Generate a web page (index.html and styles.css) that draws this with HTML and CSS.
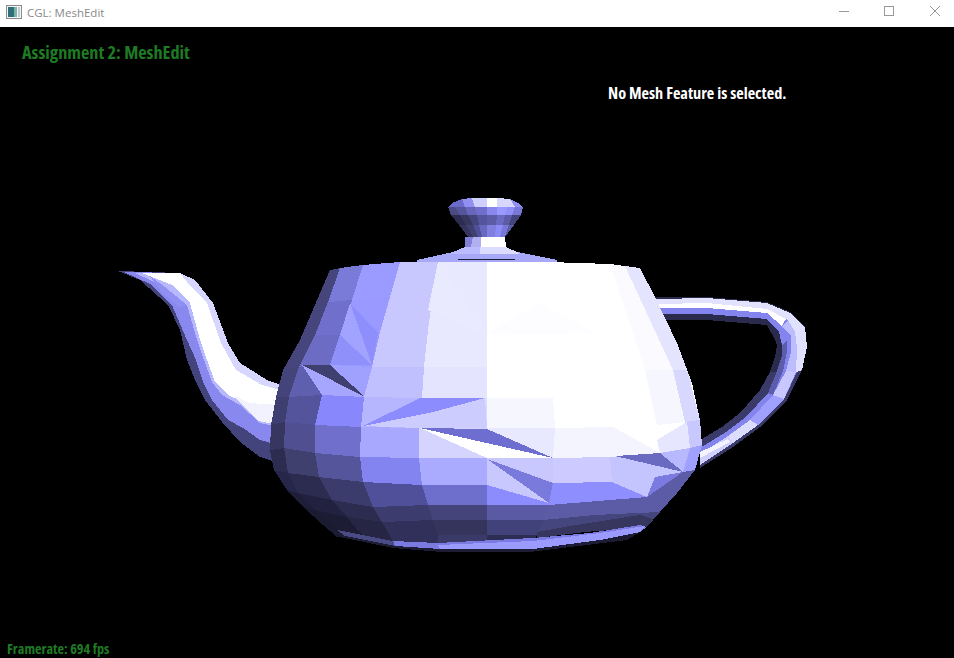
FILE: index.html
```html
<!DOCTYPE html>
<html lang="en">
<head>
<meta charset="utf-8">
<title>CGL: MeshEdit</title>
<link rel="stylesheet" href="styles.css">
</head>
<body>
<div class="window">
  <header class="titlebar">
    <svg class="app-icon" width="16" height="16" viewBox="0 0 16 16">
      <rect x="0.5" y="1.5" width="15" height="13" fill="#f4f4f4" stroke="#8c8c8c"/>
      <rect x="2" y="3" width="6" height="10" fill="#2f6f7a"/>
      <rect x="8" y="3" width="3" height="10" fill="#7fb3a8"/>
      <rect x="12" y="3" width="2" height="10" fill="#c4c9d4"/>
    </svg>
    <span class="title">CGL: MeshEdit</span>
    <div class="controls">
      <svg class="control" width="46" height="27" viewBox="0 0 46 27"><path d="M23 11.5H33" class="glyph"/></svg>
      <svg class="control" width="46" height="27" viewBox="0 0 46 27"><rect x="22.5" y="6.5" width="9" height="9" class="glyph"/></svg>
      <svg class="control" width="46" height="27" viewBox="0 0 46 27"><path d="M22 6L32 16M32 6L22 16" class="glyph"/></svg>
    </div>
  </header>
  <main class="viewport">
    <svg class="scene" width="954" height="631" viewBox="0 27 954 631">
      <g class="handle">
        <polygon fill="#2a2a4c" points="655,297 707,297 767,302 790,312 805,327 807,347 802,370 787,400 760,427 733,447 700,468 700,440 722,427 740,413 760,390 770,372 775,357 777,345 775,340 767,325 707,320 665,320"/>
        <polygon fill="#3a3a68" points="802,370 787,400 760,427 733,447 700,468 700,440 722,427 740,413 760,390 770,372"/>
        <polygon fill="#8484ee" points="656,300 707,300 767,305 788,315 802,329 803,348 798,370 784,399 758,425 733,443 700,465 700,448 726,432 746,417 768,393 777,371 782,355 782,345 779,332 767,319 707,314 662,314"/>
        <polygon fill="#5c5cac" points="782,345 782,355 777,371 768,393 773,395 783,371 787,352 787,340"/>
        <polygon fill="#ffffff" points="656,300 707,300 767,305 788,315 782,326 767,313 707,308 660,308"/>
        <polygon fill="#e2e2ff" points="656,299 707,298 767,303 790,313 788,320 767,309 707,303 658,304"/>
        <polygon fill="#e0e0ff" points="790,313 805,327 807,347 802,370 796,372 797,348 795,332 788,320"/>
        <polygon fill="#bcbcff" points="782,326 788,320 795,332 797,348 796,372 786,371 791,352 791,336"/>
        <polygon fill="#c8c8ff" points="786,371 796,372 784,399 773,395"/>
        <polygon fill="#a0a0ff" points="773,395 784,399 758,425 750,420"/>
        <polygon fill="#dcdcff" points="750,420 758,425 733,443 728,436"/>
        <polygon fill="#d0d0ff" points="728,436 733,443 700,465 700,454"/>
        <polygon fill="#f4f4ff" points="728,439 700,452 700,458 730,442"/>
      </g>
      <g class="spout">
        <polygon fill="#44447c" points="118,271 140,280 168,305 180,330 187,360 195,380 205,400 222,422 240,442 260,457 272,461 281,385 267,380 240,363 228,343 213,303 195,280 180,273"/>
        <polygon fill="#8888ee" points="124,272 150,284 172,305 187,340 196,360 203,382 212,400 228,420 243,428 260,440 275,444 281,385 267,380 240,363 228,343 213,303 195,280 180,273"/>
        <polygon fill="#b8b8ff" points="135,273 165,287 187,305 197,340 204,360 212,382 222,395 240,405 260,423 278,427 281,385 267,380 240,363 228,343 213,303 195,280 180,273"/>
        <polygon fill="#9090f4" points="150,276 165,287 187,305 179,307 162,293"/>
        <polygon fill="#ffffff" points="142,273 172,285 190,303 200,340 207,360 215,382 228,395 250,405 279,405 281,385 267,380 240,363 228,343 213,303 195,280 180,273"/>
        <polygon fill="#f2f2ff" points="232,395 250,403 279,405 278,425 258,421 242,405"/>
        <polygon fill="#d6d6ff" points="180,273 195,280 213,303 228,343 240,363 267,380 281,385 281,390 262,385 236,370 221,343 207,303 190,286"/>
      </g>
      <g class="body">
        <polygon fill="#46467c" points="330,270 340,268 328,302 315,335 299,367 283,370 300,340 317,300"/>
        <polygon fill="#44447a" points="283,370 299,367 289,397 276,397"/>
        <polygon fill="#3e3e70" points="276,397 289,397 285,422 271,425"/>
        <polygon fill="#36365f" points="271,425 285,422 284,448 270,450"/>
        <polygon fill="#2c2c50" points="270,450 284,448 288,473 274,470"/>
        <polygon fill="#26264a" points="274,470 288,473 298,493 287,490"/>
        <polygon fill="#1e1e38" points="287,490 298,493 315,510 303,507"/>
        <polygon fill="#1a1a30" points="303,507 315,510 335,527 345,537 337,537 323,525"/>

        <polygon fill="#7a7ad8" points="340,268 363,265 352,300 328,302"/>
        <polygon fill="#7070cc" points="328,302 352,300 341,335 315,335"/>
        <polygon fill="#6c6cc4" points="315,335 341,335 330,365 299,367"/>
        <polygon fill="#5f5fb0" points="299,367 330,365 322,395 289,397"/>
        <polygon fill="#54549c" points="289,397 322,395 315,425 285,422"/>
        <polygon fill="#4f4f92" points="285,422 315,425 315,453 284,448"/>
        <polygon fill="#40406f" points="284,448 315,453 319,477 288,473"/>
        <polygon fill="#2c2c50" points="288,473 319,477 332,500 298,493"/>
        <polygon fill="#222240" points="298,493 332,500 347,517 315,510"/>
        <polygon fill="#1c1c34" points="315,510 347,517 360,533 367,540 345,537 335,527"/>

        <polygon fill="#9a9aff" points="363,265 400,262 390,297 352,300"/>
        <polygon fill="#9999ff" points="352,300 390,297 380,332 341,335"/>
        <polygon fill="#9999ff" points="341,335 380,332 372,367 330,365"/>
        <polygon fill="#a0a0ff" points="330,365 372,367 364,397 322,395"/>
        <polygon fill="#8888fc" points="322,395 364,397 361,427 315,425"/>
        <polygon fill="#7070cc" points="315,425 361,427 360,457 315,453"/>
        <polygon fill="#55559c" points="315,453 360,457 363,482 319,477"/>
        <polygon fill="#3c3c6c" points="319,477 363,482 373,507 332,500"/>
        <polygon fill="#2c2c50" points="332,500 373,507 382,522 347,517"/>
        <polygon fill="#262644" points="347,517 382,522 395,542 367,540 360,533"/>

        <polygon fill="#c8c8ff" points="400,262 438,261 433,295 390,297"/>
        <polygon fill="#c8c8ff" points="390,297 433,295 428,330 380,332"/>
        <polygon fill="#c8c8ff" points="380,332 428,330 424,367 372,367"/>
        <polygon fill="#c0c0ff" points="372,367 424,367 422,398 364,397"/>
        <polygon fill="#b6b6ff" points="364,397 422,398 419,428 361,427"/>
        <polygon fill="#a8a8ff" points="361,427 419,428 419,458 360,457"/>
        <polygon fill="#8484f0" points="360,457 419,458 422,485 363,482"/>
        <polygon fill="#50509a" points="363,482 422,485 428,505 373,507"/>
        <polygon fill="#3c3c6e" points="373,507 428,505 433,520 382,522"/>
        <polygon fill="#30305a" points="382,522 433,520 438,535 438,545 395,545"/>

        <polygon fill="#e8e8ff" points="438,261 487,260 487,295 433,295"/>
        <polygon fill="#e8e8ff" points="433,295 487,295 487,330 428,330"/>
        <polygon fill="#e8e8ff" points="428,330 487,330 487,367 424,367"/>
        <polygon fill="#e4e4ff" points="424,367 487,367 487,398 422,398"/>
        <polygon fill="#dcdcff" points="422,398 487,398 487,428 419,428"/>
        <polygon fill="#d4d4ff" points="419,428 487,428 487,458 419,458"/>
        <polygon fill="#aaaaff" points="419,458 487,458 487,485 422,485"/>
        <polygon fill="#6e6ecc" points="422,485 487,485 487,505 428,505"/>
        <polygon fill="#44447a" points="428,505 487,505 487,520 433,520"/>
        <polygon fill="#34345c" points="433,520 487,520 487,535 438,535"/>
        <polygon fill="#3a3a68" points="438,535 487,535 487,545 438,545"/>

        <polygon fill="#ffffff" points="487,260 610,264 625,266 640,268 655,297 677,343 692,383 700,420 702,445 660,453 555,458 487,458"/>
        <polygon fill="#f6f6ff" points="487,398 553,398 555,428 487,428"/>
        <polygon fill="#e8e8ff" points="487,428 555,428 553,458 487,458"/>
        <polygon fill="#f4f4ff" points="555,428 613,427 660,453 610,457 553,458"/>
        <polygon fill="#fdfdff" points="487,333 540,303 595,333 487,335"/>
        <polygon fill="#fafaff" points="610,264 625,266 673,370 645,370"/>
        <polygon fill="#f6f6ff" points="645,370 673,370 685,422 657,425"/>
        <polygon fill="#e4e4ff" points="625,266 640,268 655,297 677,343 692,383 687,385 673,370"/>
        <polygon fill="#d8d8ff" points="673,370 687,370 700,420 685,422"/>
        <polygon fill="#c8c8ff" points="685,422 700,420 702,445 690,448"/>
        <polygon fill="#e6e6ff" points="660,453 657,440 687,422 690,448"/>

        <polygon fill="#c8c8ff" points="487,458 553,458 553,483 487,485"/>
        <polygon fill="#cccaff" points="553,458 610,457 612,482 553,483"/>
        <polygon fill="#c4c4ff" points="610,457 660,453 683,472 647,497 612,482"/>
        <polygon fill="#b8b8ff" points="660,453 690,448 683,472"/>
        <polygon fill="#a0a0ff" points="690,448 702,445 695,470 683,472"/>
        <polygon fill="#8c8cff" points="487,485 553,483 549,505 487,505"/>
        <polygon fill="#8e8eff" points="553,483 612,482 647,497 549,505"/>
        <polygon fill="#5a5aa4" points="487,505 549,505 543,520 487,520"/>
        <polygon fill="#5c5ca6" points="549,505 647,497 677,493 660,512 595,515 543,520"/>
        <polygon fill="#42427a" points="487,520 543,520 537,535 487,535"/>
        <polygon fill="#46467e" points="543,520 595,515 660,512 647,527 585,532 537,535"/>
        <polygon fill="#36365f" points="570,526 640,515 653,519 647,527 585,532 537,538 537,532"/>
        <polygon fill="#2e2e55" points="487,535 537,535 532,545 487,545"/>
        <polygon fill="#5c5ca6" points="683,472 695,470 677,493 647,497"/>
        <polygon fill="#7a7ae0" points="647,497 655,477 683,472"/>
      </g>
      <g class="foot">
        <polygon fill="#1c1c34" points="323,525 340,533 393,541 487,545 533,540 647,526 640,532 627,540 530,552 442,552 393,548 340,537"/>
        <polygon fill="#4a4a84" points="337,530 393,541 395,546 345,536"/>
        <polygon fill="#7a7ae0" points="393,541 438,543 533,538 590,533 640,525 647,527 640,532 600,540 533,549 440,549 395,546"/>
        <polygon fill="#9a9aff" points="438,545 533,541 600,533 645,526 640,532 600,540 533,549 440,549"/>
      </g>
      <g class="facets">
        <polygon fill="#8e8efc" points="350,303 378,333 372,365"/>
        <polygon fill="#a2a2ff" points="350,303 372,365 340,335"/>
        <polygon fill="#9090fa" points="340,335 372,365 330,365"/>
        <polygon fill="#3f3f70" points="302,365 330,365 365,397"/>
        <polygon fill="#a6a6ff" points="302,365 365,397 322,395"/>
        <polygon fill="#8c8cff" points="363,426 420,398 485,398 433,412"/>
        <polygon fill="#ccccff" points="363,426 433,412 485,398 487,428 419,428"/>
        <polygon fill="#6e6ed0" points="420,428 487,429 553,458"/>
        <polygon fill="#ffffff" points="420,428 553,458 487,458"/>
        <polygon fill="#7a7adc" points="487,459 553,483 549,503"/>
        <polygon fill="#c8c8ff" points="487,459 549,503 487,485"/>
        <polygon fill="#6a6ac0" points="615,456 660,453 683,472"/>
        <polygon fill="#eaeaff" points="438,262 487,335 428,310"/>
      </g>
      <g class="knob">
        <polygon fill="#a8a8f8" points="417,260 453,252 465,247 506,247 517,252 557,260 557,262 417,262"/>
        <polygon fill="#bbbbff" points="453,252 465,247 480,247 480,254 450,254"/>
        <polygon fill="#dcdcff" points="480,247 506,247 517,252 520,254 480,254"/>
        <polygon fill="#1c1c34" points="458,259 515,259 515,260 458,260"/>
        <polygon fill="#8080d8" points="465,237 473,237 471,247 465,247"/>
        <polygon fill="#b0b0f0" points="473,237 481,237 481,247 471,247"/>
        <polygon fill="#ffffff" points="481,237 505,237 506,247 481,247"/>
        <polygon fill="#4a4a84" points="448,207 455,207 460,215 451,215"/>
        <polygon fill="#55559c" points="455,207 465,207 468,215 460,215"/>
        <polygon fill="#6666bb" points="465,207 475,207 477,215 468,215"/>
        <polygon fill="#7070cc" points="475,207 487,207 487,215 477,215"/>
        <polygon fill="#8888ee" points="487,207 497,207 497,215 487,215"/>
        <polygon fill="#9999ff" points="497,207 507,207 505,215 497,215"/>
        <polygon fill="#9090f8" points="507,207 515,207 512,215 505,215"/>
        <polygon fill="#7878d8" points="515,207 523,207 521,215 512,215"/>
        <polygon fill="#2c2c50" points="451,215 460,215 466,225 459,225"/>
        <polygon fill="#36365f" points="460,215 468,215 473,225 466,225"/>
        <polygon fill="#44447c" points="468,215 477,215 479,225 473,225"/>
        <polygon fill="#54549c" points="477,215 487,215 487,225 479,225"/>
        <polygon fill="#5c5ca6" points="487,215 497,215 496,225 487,225"/>
        <polygon fill="#6a6ac0" points="497,215 505,215 503,225 496,225"/>
        <polygon fill="#5c5ca6" points="505,215 512,215 509,225 503,225"/>
        <polygon fill="#44447c" points="512,215 521,215 514,225 509,225"/>
        <polygon fill="#34345c" points="459,225 466,225 473,237 468,237"/>
        <polygon fill="#40406f" points="466,225 473,225 478,237 473,237"/>
        <polygon fill="#50509a" points="473,225 479,225 482,237 478,237"/>
        <polygon fill="#6868c0" points="479,225 487,225 487,237 482,237"/>
        <polygon fill="#8080e0" points="487,225 496,225 495,237 487,237"/>
        <polygon fill="#8c8cf8" points="496,225 503,225 500,237 495,237"/>
        <polygon fill="#7878d8" points="503,225 509,225 505,237 500,237"/>
        <polygon fill="#5c5ca6" points="509,225 514,225 505,237"/>
        <polygon fill="#6a6ac8" points="448,207 452,203 462,199 465,207"/>
        <polygon fill="#9090f0" points="462,199 472,198 475,207 465,207"/>
        <polygon fill="#d0d0ff" points="472,198 487,198 487,207 475,207"/>
        <polygon fill="#ffffff" points="487,198 497,198 497,207 487,207"/>
        <polygon fill="#d8d8ff" points="497,198 510,199 515,207 497,207"/>
        <polygon fill="#9090f0" points="510,199 518,203 523,207 515,207"/>
      </g>
    </svg>
    <div class="label assignment">Assignment 2: MeshEdit</div>
    <div class="label status">No Mesh Feature is selected.</div>
    <div class="label framerate">Framerate: 694 fps</div>
  </main>
</div>
</body>
</html>
```
FILE: styles.css
```css
* { box-sizing: border-box; }
html, body { margin: 0; padding: 0; background: #000; }
.window { width: 954px; height: 658px; display: flex; flex-direction: column; overflow: hidden; }
.titlebar { height: 27px; flex: none; background: #fff; display: flex; align-items: center; padding-left: 6px; }
.app-icon { flex: none; margin-top: -4px; }
.title { margin-left: 5px; margin-top: -3px; font: 11.5px "Open Sans", "Noto Sans", sans-serif; color: #8a8a8a; }
.controls { margin-left: auto; display: flex; }
.control { display: block; }
.glyph { fill: none; stroke: #999; stroke-width: 1; }
.viewport { position: relative; flex: 1; background: #000; overflow: hidden; }
.scene { position: absolute; left: 0; top: 0; shape-rendering: crispEdges; }
.label { position: absolute; white-space: nowrap; font-family: "Open Sans", sans-serif; font-weight: 700; font-stretch: 75%; }
.assignment { left: 22px; top: 13px; font-size: 18.3px; line-height: 24px; color: #1f7a24; }
.status { left: 608px; top: 55px; font-size: 16.3px; line-height: 22px; color: #fff; }
.framerate { left: 7px; top: 612px; font-size: 14.2px; line-height: 19px; color: #1f7a24; }
```
